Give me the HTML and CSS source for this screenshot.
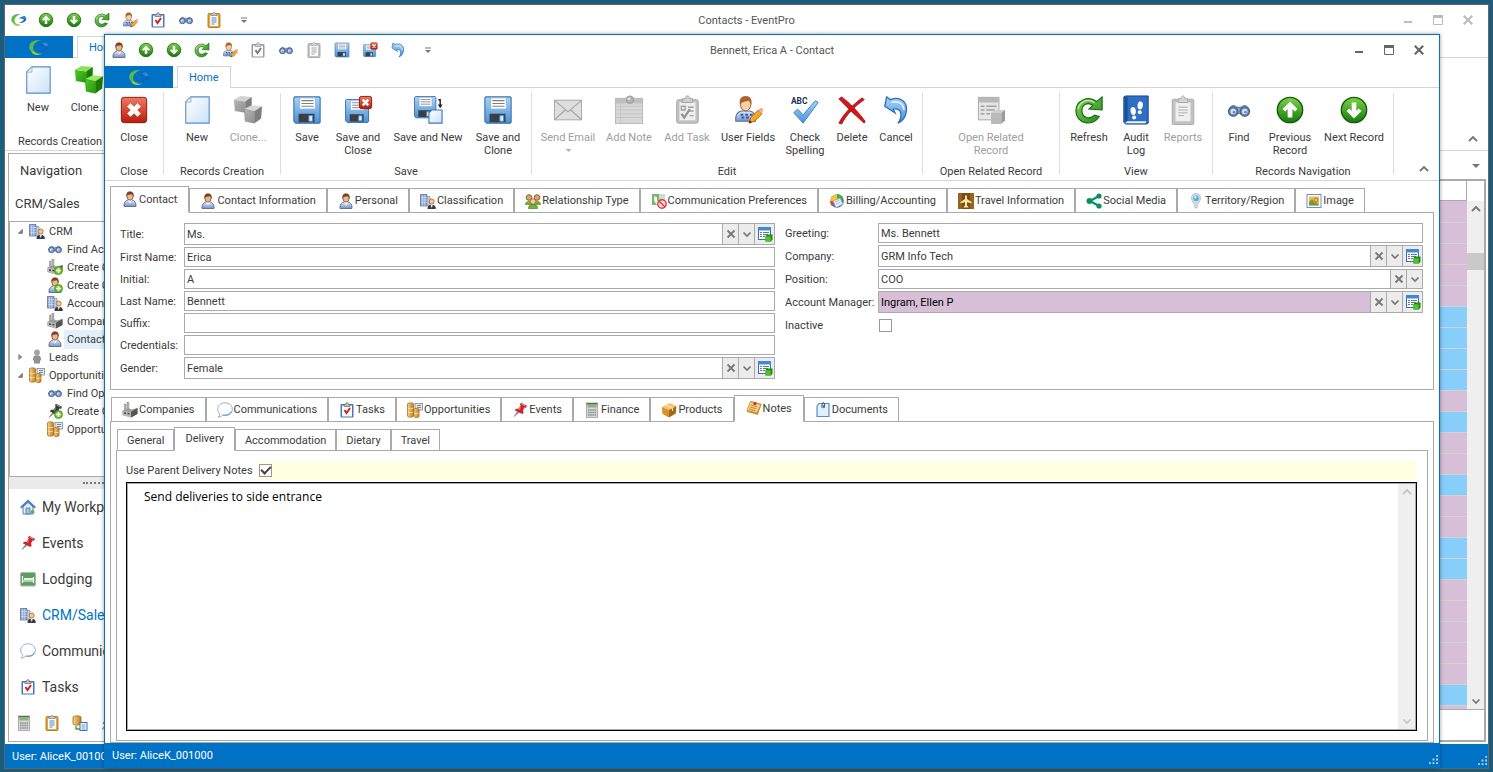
FILE: index.html
```
<!DOCTYPE html>
<html lang="en">
<head>
    <meta charset="UTF-8">
    <title>Contacts - EventPro</title>
    <link rel="stylesheet" href="styles.css">
</head>
<body>
    <!-- Icon set -->
    <svg class="sprite" width="0" height="0" aria-hidden="true">
        <defs>
            <linearGradient id="g-green" x1="0" y1="0" x2="0" y2="1"><stop offset="0" stop-color="#7ed348"/><stop offset="1" stop-color="#167a0a"/></linearGradient>
            <linearGradient id="g-blue" x1="0" y1="0" x2="0" y2="1"><stop offset="0" stop-color="#a9d4f7"/><stop offset="1" stop-color="#4a92d8"/></linearGradient>
            <linearGradient id="g-page" x1="0" y1="0" x2="1" y2="1"><stop offset="0" stop-color="#ffffff"/><stop offset="1" stop-color="#c9e2fa"/></linearGradient>
            <linearGradient id="g-red" x1="0" y1="0" x2="0" y2="1"><stop offset="0" stop-color="#ee7a62"/><stop offset="1" stop-color="#b81c0c"/></linearGradient>
            <linearGradient id="g-shirt" x1="0" y1="0" x2="0" y2="1"><stop offset="0" stop-color="#e3ebf7"/><stop offset="1" stop-color="#7292c4"/></linearGradient>
            <linearGradient id="g-gold" x1="0" y1="0" x2="1" y2="0"><stop offset="0" stop-color="#f8d489"/><stop offset="1" stop-color="#c47d1c"/></linearGradient>
            <linearGradient id="g-arc" x1="0" y1="0" x2="1" y2="1"><stop offset="0" stop-color="#8bd05a"/><stop offset="1" stop-color="#1c8a1c"/></linearGradient>
            <linearGradient id="g-cube" x1="0" y1="0" x2="1" y2="1"><stop offset="0" stop-color="#4fc92a"/><stop offset="1" stop-color="#239608"/></linearGradient>
        </defs>

        <symbol id="i-logo" viewBox="0 0 24 16">
            <path d="M14 1C6 0 2 4 3 9c1 4 6 6 12 4.500C9 14 6 11 6.500 8 7 4.500 10 2 14 1z" fill="#5db947"/>
            <path d="M7 12c2 2 5 2.500 8 1.500-3 2.500-8 2-10-1z" fill="#a5cf3a"/>
            <path d="M11 6l5-2 5 2.500c-1 4-5 5.500-9 5 3-1 5-2 6-4-2-1-4-1.500-7-1.500z" fill="#1d5fae"/>
            <path d="M15 4l4-1 2 3-3 1z" fill="#2f8ad6"/>
        </symbol>
        <symbol id="i-person" viewBox="0 0 16 16">
            <path d="M2 15.500c-.4-4 1.500-6 4-6.500h4c2.500.5 4.400 2.500 4 6.500z" fill="url(#g-shirt)" stroke="#4d6186" stroke-width=".8"/>
            <path d="M6 9l2 3.500L10 9z" fill="#fff"/>
            <ellipse cx="8" cy="5.200" rx="3.100" ry="4" fill="#e8b88c" stroke="#7a4428" stroke-width=".7"/>
            <path d="M4.300 6.500C3.800 2 5.500.4 8 .4s4.300 1.600 3.700 6.100C11 4 10.500 3.500 10 3.300c-2 .7-4 .2-5 1z" fill="#7c3f24"/>
        </symbol>
        <symbol id="i-up" viewBox="0 0 32 32">
            <circle cx="16" cy="16" r="13.500" fill="url(#g-green)" stroke="#0f5e08" stroke-width="1.500"/>
            <path d="M16 7l8 8-3 2.500-2.500-2.500v9h-5v-9L11 17.500 8 15z" fill="#fff"/>
        </symbol>
        <symbol id="i-down" viewBox="0 0 32 32">
            <circle cx="16" cy="16" r="13.500" fill="url(#g-green)" stroke="#0f5e08" stroke-width="1.500"/>
            <path d="M16 25l8-8-3-2.500-2.500 2.500V8h-5v9L11 14.500 8 17z" fill="#fff"/>
        </symbol>
        <symbol id="i-refresh" viewBox="0 0 32 32">
            <path d="M24 7C15 0 2 6 2 17c0 13 17 18 25 6l-5-1.500c-5 5-13 3-13.500-4C8 10 15 7 20 11l-4 4 14 1V2z" fill="url(#g-arc)" stroke="#12680f" stroke-width="1.200"/>
            <path d="M22 8C15 3 6 7 4.500 15" fill="none" stroke="#c5eca6" stroke-width="1.500"/>
        </symbol>
        <symbol id="i-userfields" viewBox="0 0 32 32">
            <path d="M3 28c-1-7 2-10 6-11h9c5 1 7 4 6 11z" fill="url(#g-shirt)" stroke="#5a6f96" stroke-width="1.200"/>
            <path d="M8 21h3M13 21h3M18 21h3M9 24h3M14 24h3" stroke="#2b5db8" stroke-width="2"/>
            <ellipse cx="13.500" cy="10" rx="5.500" ry="7" fill="#f6cfa4" stroke="#9a5a28"/>
            <path d="M7.500 11C6 4 9 1 13.500 1S21 4 19.500 11c0-3-2-4-3-5-3 1-7 0-9 5z" fill="#a8642a"/>
            <path d="M17 30l2-6 8-8 4 4-8 8z" fill="#f7a823" stroke="#b66a0c"/>
            <path d="M27 16l2-2c2-1 4 1 3 3l-2 2z" fill="#f4a9a4"/>
            <path d="M17 30l1-3 2 2z" fill="#222"/>
        </symbol>
        <symbol id="i-task" viewBox="0 0 16 16">
            <rect x="1.500" y="2" width="13" height="13.500" rx="1" fill="#4a76b4"/>
            <rect x="3" y="3.500" width="10" height="11" fill="#f8fafd"/>
            <path d="M5 4.500V2.500h1.500c0-2.500 3-2.500 3 0H11v2z" fill="#b9bfc8" stroke="#555" stroke-width=".6"/>
            <path d="M5.500 8L7.500 11l3.500-5" fill="none" stroke="#cf1f1f" stroke-width="1.900"/>
        </symbol>
        <symbol id="i-addtask" viewBox="0 0 32 32">
            <rect x="5" y="5" width="23" height="25" rx="2" fill="#b4b4b4" stroke="#909090"/>
            <rect x="8" y="8" width="17" height="19" fill="#ececec"/>
            <path d="M11 8V4h3c0-4 5-4 5 0h3v4z" fill="#c4c4c4" stroke="#888"/>
            <path d="M10 12h4v4h-4zM17 13h6M17 17h6M19 22h4" fill="none" stroke="#888" stroke-width="1.500"/>
            <path d="M10 20l3 4 6-9" fill="none" stroke="#777" stroke-width="2.400"/>
        </symbol>
        <symbol id="i-find" viewBox="-2 -2 36 36">
            <path d="M4 12c2-3 6-3 9 0h6c3-3 7-3 9 0l3 6-15 3L1 18z" fill="#8fa4c4" stroke="#4a5e80"/>
            <circle cx="8" cy="18" r="6.500" fill="#6d88b2" stroke="#3f5680" stroke-width="1.500"/>
            <circle cx="24" cy="18" r="6.500" fill="#6d88b2" stroke="#3f5680" stroke-width="1.500"/>
            <circle cx="8" cy="18" r="3.800" fill="#cfe6fb"/>
            <circle cx="24" cy="18" r="3.800" fill="#cfe6fb"/>
            <circle cx="9" cy="19" r="1.800" fill="#5a8ccc"/>
            <circle cx="25" cy="19" r="1.800" fill="#5a8ccc"/>
        </symbol>
        <symbol id="i-clip" viewBox="0 0 16 16">
            <rect x="2" y="1.500" width="12" height="14" rx="1.200" fill="#eaa928" stroke="#9c6a10" stroke-width=".8"/>
            <rect x="4" y="3.500" width="8" height="10.500" fill="#f6fafd"/>
            <path d="M5 3.500V1.500h1.800c0-1.500 2.400-1.500 2.400 0H11v2z" fill="#c5cad2" stroke="#666" stroke-width=".5"/>
            <path d="M5.500 6h5M5.500 8h5M5.500 10h5M5.500 12h3" stroke="#4d7cb4" stroke-width=".9"/>
        </symbol>
        <symbol id="i-save" viewBox="0 0 32 32">
            <path d="M3 2h26l1 1v26l-1 1H4l-2-2V3z" fill="url(#g-blue)" stroke="#3a72ac" stroke-width="1.200"/>
            <path d="M8 3h17v12H8z" fill="#fff" stroke="#8fb2d6"/>
            <path d="M10 6h13M10 9h13M10 12h13" stroke="#808080" stroke-width="1.100"/>
            <path d="M7 20h17v9H7z" fill="#3b3f45"/>
            <path d="M18 22h4v6h-4z" fill="#e4effa" stroke="#4d90d6"/>
        </symbol>
        <symbol id="i-saveclose" viewBox="0 0 32 32">
            <use href="#i-save" width="28" height="28" x="1" y="3"/>
            <rect x="17.500" y="1.500" width="13" height="13" rx="2" fill="url(#g-red)" stroke="#8d1206"/>
            <path d="M21 5l6 6M27 5l-6 6" stroke="#fff" stroke-width="2.600"/>
        </symbol>
        <symbol id="i-savenew" viewBox="0 0 32 32">
            <use href="#i-save" width="26" height="26" x="0" y="0"/>
            <path d="M20 16h11v14H17V19z" fill="url(#g-page)" stroke="#3c78c0" stroke-width="1.200"/>
            <path d="M27 5h2v6M29 7v4" fill="none" stroke="#222" stroke-width="1.500"/>
            <path d="M26.500 10h5L29 14z" fill="#222"/>
        </symbol>
        <symbol id="i-undo" viewBox="0 0 32 32">
            <path d="M4 12L6 2l4 3c10-4 19 2 17 13-1 6-4 10-9 12 5-6 5-17-5-15l2 4z" fill="url(#g-blue)" stroke="#2d6fb8" stroke-width="1.400"/>
            <path d="M11 8c7-2 13 1 13.500 8" fill="none" stroke="#e0f0fc" stroke-width="1.800"/>
        </symbol>
        <symbol id="i-new" viewBox="0 0 32 32">
            <path d="M9.500 2h19.500v28H4V7.500z" fill="url(#g-page)" stroke="#5a8dc8" stroke-width="1.200"/>
            <path d="M9.500 2v5.500H4z" fill="#fff" stroke="#7fa9d8"/>
        </symbol>
        <symbol id="i-clone" viewBox="0 0 32 32">
            <path d="M1 5l12 2v12L2 17z" fill="url(#g-cube)"/>
            <path d="M1 5l7-4 12 1-7 5z" fill="#8be354"/>
            <path d="M13 7l7-5v11l-7 6z" fill="#1c7a09"/>
            <path d="M12 15l11 2v13l-10-2z" fill="url(#g-cube)" stroke="#1c7a09" stroke-width=".5"/>
            <path d="M12 15l8-4 11 1-8 5z" fill="#9aea66"/>
            <path d="M23 17l8-5-1 13-7 5z" fill="#1c7a09"/>
        </symbol>
        <symbol id="i-close" viewBox="0 0 32 32">
            <rect x="2.500" y="2.500" width="27" height="27" rx="3" fill="url(#g-red)" stroke="#8d1206"/>
            <path d="M10.500 10.500l11 11M21.500 10.500l-11 11" stroke="#fff" stroke-width="5"/>
        </symbol>
        <symbol id="i-mail" viewBox="0 0 32 32">
            <rect x="1.500" y="5.500" width="29" height="21" fill="#d6d6d6" stroke="#8f8f8f"/>
            <path d="M2 6l14 12L30 6M2 26l11-10M30 26L19 16" fill="none" stroke="#8f8f8f" stroke-width="1.200"/>
        </symbol>
        <symbol id="i-addnote" viewBox="0 0 32 32">
            <rect x="1.500" y="3.500" width="29" height="27" fill="#cecece" stroke="#a5a5a5"/>
            <path d="M2 12h28M2 16h28M2 20h28M2 24h28M7 4v26" stroke="#b5b5b5"/>
            <path d="M2 4h28v5H2z" fill="#b0b0b0"/>
            <circle cx="17" cy="5" r="4" fill="#a0a0a0" stroke="#808080"/>
            <circle cx="16" cy="4" r="1.400" fill="#e4e4e4"/>
        </symbol>
        <symbol id="i-check" viewBox="0 0 32 32">
            <path d="M4 19l4-4 6 6L27 6l3 2-16 22z" fill="url(#g-blue)" stroke="#3a7fc4"/>
            <text x="1" y="10" class="icon-abc">ABC</text>
        </symbol>
        <symbol id="i-delete" viewBox="0 0 32 32">
            <path d="M2 4l3-2c8 6 17 15 25 26l-1 2C20 22 10 13 2 4z" fill="#d8161c" stroke="#8f0b0f" stroke-width=".8"/>
            <path d="M27 3l2 2C19 12 10 21 5 31l-3-1C7 20 17 10 27 3z" fill="#d8161c" stroke="#8f0b0f" stroke-width=".8"/>
        </symbol>
        <symbol id="i-related" viewBox="0 0 32 32">
            <rect x="2.500" y="2.500" width="22" height="24" fill="#e0e0e0" stroke="#909090"/>
            <path d="M3 3h21v5H3z" fill="#a6a6a6"/>
            <path d="M5 12h4M11 12h11M5 16h4M11 16h9M5 20h4M11 20h4" stroke="#8a8a8a" stroke-width="1.500"/>
            <path d="M16 19l4-3h11l-4 3z" fill="#c5c5c5"/><path d="M16 19h11v12H16z" fill="#a9a9a9"/><path d="M27 19l4-3v11l-4 4z" fill="#848484"/>
        </symbol>
        <symbol id="i-audit" viewBox="0 0 32 32">
            <path d="M5 1h24v29l-2 1H5l-2-2V2z" fill="#2e6fc4" stroke="#17437f"/>
            <path d="M5 30h21l1-2H6z" fill="#eef4fb"/>
            <path d="M4 2h3v26H4z" fill="#1d4f98"/>
            <ellipse cx="13" cy="17" rx="2.800" ry="4.300" fill="#fff" transform="rotate(-8 13 17)"/><circle cx="14" cy="24" r="2.100" fill="#fff"/>
            <ellipse cx="20.500" cy="11" rx="2.800" ry="4.300" fill="#fff" transform="rotate(8 20 11)"/><circle cx="20" cy="18.300" r="2.100" fill="#fff"/>
        </symbol>
        <symbol id="i-reports" viewBox="0 0 32 32">
            <rect x="4.500" y="4.500" width="23" height="27" rx="1.500" fill="#b2b2b2" stroke="#929292"/>
            <rect x="8" y="8" width="16" height="20" fill="#ececec"/>
            <path d="M11 8V4h3c0-4 4-4 4 0h3v4z" fill="#cdcdcd" stroke="#929292"/>
            <path d="M11 13h10M11 16h10M11 19h10M11 22h6" stroke="#989898"/>
        </symbol>
        <symbol id="i-crm" viewBox="0 0 16 16">
            <path d="M.5 1.500h6.500V13H.5z" fill="#8ea6d2" stroke="#5b71a4" stroke-width=".8"/>
            <path d="M7 3.500h3V13H7z" fill="#c0cde6" stroke="#6b80b0" stroke-width=".6"/>
            <path d="M2.500 2v11M4.800 2v11M1 4.500h6M1 7h6M1 9.500h6" stroke="#dbe4f5" stroke-width=".6"/>
            <path d="M7.500 16c0-3 1-4.300 4-4.300s4.300 1.300 4.300 4.300z" fill="#3b3b45"/>
            <path d="M10.500 11.500l1.200 3.500 1.200-3.500z" fill="#fff"/>
            <circle cx="11.700" cy="8.500" r="2.500" fill="#f4c88f" stroke="#a8641c" stroke-width=".8"/>
        </symbol>
        <symbol id="i-group" viewBox="0 0 16 16">
            <path d="M0 12c0-3 1.500-4 4-4s4 1 4 4zM8 12c0-3 1.500-4 4-4s4 1 4 4z" fill="#7aa83a"/>
            <circle cx="4" cy="4.500" r="2.800" fill="#dfa66a" stroke="#8e5a2c"/>
            <circle cx="12" cy="4.500" r="2.800" fill="#dfa66a" stroke="#8e5a2c"/>
            <path d="M3.500 15.500c0-3 1.500-4 4.500-4s4.500 1 4.500 4z" fill="#6fb33a" stroke="#3d701a" stroke-width=".6"/>
            <circle cx="8" cy="8.500" r="2.700" fill="#f5cda0" stroke="#a0663c" stroke-width=".8"/>
        </symbol>
        <symbol id="i-commpref" viewBox="0 0 16 16">
            <path d="M1 1h10v11H1z" fill="#7ab570"/><path d="M8 1h6v12H8z" fill="#c9e0c4"/>
            <path d="M3 3l3 1v3l2 3-2 2-3-4z" fill="#e9f5e6"/>
            <circle cx="11" cy="11" r="4.200" fill="#fbdede" stroke="#d93b45" stroke-width="1.400"/>
            <path d="M8 8l6 6" stroke="#d93b45" stroke-width="1.400"/>
        </symbol>
        <symbol id="i-billing" viewBox="0 0 16 16">
            <circle cx="8" cy="8" r="6.800" fill="#2e79cf"/>
            <path d="M8 8L1.500 10A7 7 0 0 1 8 1.200z" fill="#f5c92f"/>
            <path d="M8 8V1.200A7 7 0 0 1 14.500 6z" fill="#4ba83a"/>
            <path d="M8 8L3 13A7 7 0 0 1 1.300 8z" fill="#e0432a"/>
            <path d="M4 8l7-3 3 6-7 3.500z" fill="#eceff3" stroke="#9aa4b0" stroke-width=".8"/>
            <path d="M6 9l4.500-2M7 11l4.500-2" stroke="#b4bcc8"/>
        </symbol>
        <symbol id="i-travel" viewBox="0 0 16 16">
            <rect width="16" height="16" fill="#7a4c14"/><path d="M0 0h4v16H0zM12 0h4v16h-4z" fill="#96641f"/>
            <path d="M8 2c.8 0 1 1 1 4l4.500 3v1.300L9 9.300V12.500l1.500 1.200v.8h-5v-.8L7 12.500V9.300l-4.500 1V9L7 6C7 3 7.200 2 8 2z" fill="#ffe5a6"/>
        </symbol>
        <symbol id="i-share" viewBox="0 0 16 16">
            <path d="M13 3L4 8l9 5" fill="none" stroke="#0a8f62" stroke-width="2.200"/>
            <circle cx="13" cy="3" r="2.600" fill="#0a8f62"/><circle cx="3.500" cy="8" r="3" fill="#0a8f62"/><circle cx="13" cy="13" r="2.600" fill="#0a8f62"/>
        </symbol>
        <symbol id="i-region" viewBox="0 0 16 16">
            <path d="M8 .5c3 0 4.700 2 4.700 4.700C12.700 8 9.500 10 9 15H7C6.500 10 3.300 8 3.300 5.200 3.300 2.500 5 .5 8 .5z" fill="#d3d9df" stroke="#b3bac2" stroke-width=".7"/>
            <circle cx="8" cy="5.200" r="2.800" fill="#4bb4e2"/><circle cx="7.300" cy="4.200" r="1.200" fill="#cdeefb"/>
        </symbol>
        <symbol id="i-image" viewBox="0 0 16 16">
            <rect x="1" y="1.500" width="14" height="13" fill="#fff" stroke="#6c90c6"/>
            <rect x="3" y="3.500" width="10" height="9" fill="#f1bd4c"/>
            <path d="M3 9l3-3 3 4 1.500-1L13 12.500H3z" fill="#6f9f35"/><circle cx="10" cy="7" r="2.400" fill="#dd7a2b"/><circle cx="10" cy="7" r="1" fill="#ffe9a0"/>
        </symbol>
        <symbol id="i-factory" viewBox="0 0 16 16">
            <path d="M2.500 2H4v7H2.500zM5 0h1.800v8H5z" fill="#b6b6b6" stroke="#7a7a7a" stroke-width=".5"/>
            <path d="M.5 8.500L7 6l2 1.500L15.500 6v6L9 15.500.5 13z" fill="#9b9b9b"/>
            <path d="M.5 8.500L9 10v5.500L.5 13z" fill="#b8b8b8"/><path d="M9 10l6.500-4v6L9 15.500z" fill="#555"/>
            <path d="M2 10.300l2 .3v1.500l-2-.3zM5.500 10.800l2 .3v1.500l-2-.3z" fill="#444"/>
        </symbol>
        <symbol id="i-plus" viewBox="0 0 16 16">
            <circle cx="11.500" cy="11.500" r="4" fill="#6cc424" stroke="#3d8a10" stroke-width=".7"/>
            <path d="M11.500 9v5M9 11.500h5" stroke="#fff" stroke-width="1.500"/>
        </symbol>
        <symbol id="i-lead" viewBox="0 0 16 16">
            <circle cx="8" cy="3.500" r="2.900" fill="#a3a3a3"/>
            <path d="M4 10c0-3 1.500-3.800 4-3.800s4 .8 4 3.800v1l-1 1v2.500H5V12l-1-1z" fill="#929292"/>
        </symbol>
        <symbol id="i-coins" viewBox="0 0 16 16">
            <rect x="8" y="1.500" width="7.500" height="6.500" fill="#e3e7ec" stroke="#7c8896" stroke-width=".8"/>
            <path d="M10 3.500h4M10 5.500h4" stroke="#7c8896"/>
            <path d="M.5 2c0-1.500 6-1.500 6 0v12c0 1.500-6 1.500-6 0z" fill="url(#g-gold)" stroke="#a36b1c" stroke-width=".8"/>
            <path d="M.5 6c1 .8 5 .8 6 0M.5 10c1 .8 5 .8 6 0" fill="none" stroke="#fff0c0" stroke-width=".7"/>
            <path d="M7 7.500c0-1.500 5-1.500 5 0v7c0 1.500-5 1.500-5 0z" fill="url(#g-gold)" stroke="#a36b1c" stroke-width=".8"/>
            <path d="M7 11c1 .8 4 .8 5 0" fill="none" stroke="#fff0c0" stroke-width=".7"/>
        </symbol>
        <symbol id="i-pushpin" viewBox="0 0 16 16">
            <path d="M2 14.500l4-5.500 1.500 1z" fill="#777" stroke="#777" stroke-width=".5"/>
            <path d="M9 .8l6 3-.8 2-1.700-.2-1.500 3 .6 2.200-1.200 1.200L3 8.500l.8-1.700 2.700-.1L8.700 3.800 8 2.500z" fill="currentColor"/>
            <path d="M9.500 2l4 2M8.500 5.500L7 8" stroke="#fff" stroke-opacity=".5"/>
        </symbol>
        <symbol id="i-home" viewBox="0 0 16 16">
            <path d="M3 8v7h10V8L8 3.500z" fill="#e6effa" stroke="#5580ba"/>
            <path d="M.8 8.800L8 1.800l7.200 7" fill="none" stroke="#4a7cc0" stroke-width="1.900"/>
            <path d="M6 9h4v6H6z" fill="#a8c4e8" stroke="#3967a8" stroke-width=".7"/>
            <circle cx="12.500" cy="13" r="2" fill="#5fb53a"/>
        </symbol>
        <symbol id="i-bed" viewBox="0 0 16 16">
            <rect x=".5" y="1.500" width="15" height="13.500" rx="1.500" fill="#5f9c62" stroke="#a3bfa4"/>
            <path d="M2.500 5v7M2.500 10h11M13.500 6v6" stroke="#fff" stroke-width="1.200"/><path d="M4 7h9v2H4z" fill="#e4f2e4"/>
        </symbol>
        <symbol id="i-bubble" viewBox="0 0 16 16">
            <path d="M8 .8c4.200 0 7.300 2.800 7.300 6.400S12.200 13.500 8 13.500c-.8 0-1.600 0-2.300-.3C4.500 14.300 3 15 1.200 15.200c1-1 1.500-2.200 1.500-3.500C1.400 10.600.7 9.200.7 7.200.7 3.600 3.800.8 8 .8z" fill="#fdfeff" stroke="#9aa4b0" stroke-width=".9"/>
            <path d="M14.500 9.500c-1.200 2.800-4.500 4-8.500 3.500" fill="none" stroke="#6fa4d8" stroke-width="1.200"/>
        </symbol>
        <symbol id="i-calc" viewBox="0 0 16 16">
            <rect x="2.500" y="1" width="11" height="14.500" fill="#d9d9d9" stroke="#9b9b9b" stroke-width=".8"/>
            <rect x="2.500" y="1" width="11" height="1.500" fill="#666"/><rect x="3.500" y="3" width="9" height="2.500" fill="#7cbd6c"/>
            <path d="M4 8h8M4 10.500h8M4 13h8" stroke="#888" stroke-width="1.500" stroke-dasharray="1.500 .7"/>
        </symbol>
        <symbol id="i-coindoc" viewBox="0 0 16 16">
            <path d="M1 2c0-1.500 8-1.500 8 0v7c0 1.500-8 1.500-8 0z" fill="url(#g-gold)" stroke="#a36b1c" stroke-width=".8"/>
            <path d="M4 11v3h4" fill="none" stroke="#3fa02a" stroke-width="1.300"/>
            <rect x="8" y="7.500" width="7" height="8" fill="#f4f9fe" stroke="#3c73b8"/><path d="M9.500 10h4M9.500 12h4M9.500 14h4" stroke="#3c73b8" stroke-width=".7"/>
        </symbol>
        <symbol id="i-box" viewBox="0 0 16 16">
            <path d="M.8 5L9 1l6.400 3-7.400 4z" fill="#f2c56f"/><path d="M.8 5L8 8v7.500L1.500 12z" fill="#d8932f"/><path d="M8 8l7.400-4-.6 7.500L8 15.500z" fill="#a9651a"/>
            <path d="M4.500 3.200L11.500 6v3" fill="none" stroke="#fbe3b0" stroke-width="1.100"/>
        </symbol>
        <symbol id="i-notes" viewBox="0 0 16 16">
            <path d="M5 1l10.500 3-3.500 11L.8 12z" fill="#cf9336"/>
            <path d="M4.500 1.500l10.500 3-4 8.500L.8 10.500z" fill="#f3cf85" stroke="#b8802c" stroke-width=".7"/>
            <path d="M5 5l6 1.800M4.200 7l6 1.800M3.300 9l6 1.800" stroke="#b8802c" stroke-width=".9"/><circle cx="9" cy="3.500" r="1.600" fill="#cf2525"/>
        </symbol>
        <symbol id="i-docs" viewBox="0 0 16 16">
            <path d="M4 1.500h10v13H2V4z" fill="#e2effc" stroke="#5a8dc8" stroke-width="1.200"/>
            <path d="M7 6V1.800c0-1.500 2.500-1.500 2.500 0v3.400c0 .8-1.200.8-1.200 0V3" fill="none" stroke="#3a4a60" stroke-width=".9"/>
        </symbol>
        <symbol id="i-lookup" viewBox="0 0 16 16">
            <rect x="1.500" y="1.500" width="12" height="12" fill="#fff" stroke="#2f72b8"/>
            <path d="M1 1h13v3.500H1z" fill="#3e8ad6"/>
            <path d="M3 6.500h2M6 6.500h6M3 8.500h2M6 8.500h5M3 10.500h2M6 10.500h2" stroke="#66788c"/>
            <path d="M8.500 10l1.500-1.500h5.500v5l-1.500 2H8.500z" fill="#1f8a10"/><path d="M8.500 10.300h5.200v5.200H8.500z" fill="#4cc22c"/>
        </symbol>
        <symbol id="i-x" viewBox="0 0 10 10"><path d="M1.500 1.500l7 7M8.500 1.500l-7 7" fill="none" stroke="currentColor" stroke-width="1.800"/></symbol>
        <symbol id="i-chevdown" viewBox="0 0 10 10"><path d="M1.500 3.500L5 7l3.500-3.500" fill="none" stroke="currentColor" stroke-width="1.700"/></symbol>
        <symbol id="i-chevup" viewBox="0 0 10 10"><path d="M1 7l4-4 4 4" fill="none" stroke="currentColor" stroke-width="1.900"/></symbol>
        <symbol id="i-more" viewBox="0 0 10 10"><path d="M2 3h6" stroke="currentColor"/><path d="M2 5h6L5 8z" fill="currentColor"/></symbol>
        <symbol id="i-caret" viewBox="0 0 10 10"><path d="M1 3h8L5 7z" fill="currentColor"/></symbol>
        <symbol id="i-min" viewBox="0 0 12 12"><path d="M2 8h8" stroke="currentColor" stroke-width="2"/></symbol>
        <symbol id="i-max" viewBox="0 0 12 12"><path d="M1.500 1.500h9v9h-9z" fill="none" stroke="currentColor"/><path d="M1 2.500h10" stroke="currentColor" stroke-width="3"/></symbol>
        <symbol id="i-grip" viewBox="0 0 10 10"><path d="M8 0h2v2H8zM4 4h2v2H4zM8 4h2v2H8zM0 8h2v2H0zM4 8h2v2H4zM8 8h2v2H8z" fill="#c5d3e0"/></symbol>
        <symbol id="i-open" viewBox="0 0 10 10"><path d="M8.500 2v6.500H2z" fill="#777"/></symbol>
        <symbol id="i-shut" viewBox="0 0 10 10"><path d="M3 1l5 4-5 4z" fill="#888"/></symbol>
    </svg>

    <!-- Contacts list window -->
    <div class="window main-window">
        <div class="title-bar">
            <div class="quick-access">
                <svg class="qa-logo"><use href="#i-logo"/></svg>
                <button aria-label="Previous"><svg class="icon"><use href="#i-up"/></svg></button>
                <button aria-label="Next"><svg class="icon"><use href="#i-down"/></svg></button>
                <button aria-label="Refresh"><svg class="icon"><use href="#i-refresh"/></svg></button>
                <button aria-label="User Fields"><svg class="icon"><use href="#i-userfields"/></svg></button>
                <button aria-label="Tasks"><svg class="icon"><use href="#i-task"/></svg></button>
                <button aria-label="Find"><svg class="icon"><use href="#i-find"/></svg></button>
                <button aria-label="Reports"><svg class="icon"><use href="#i-clip"/></svg></button>
                <button class="qa-more" aria-label="Customize"><svg class="glyph"><use href="#i-more"/></svg></button>
            </div>
            <div class="window-title">Contacts - EventPro</div>
            <div class="window-controls">
                <button aria-label="Minimize"><svg><use href="#i-min"/></svg></button>
                <button aria-label="Maximize"><svg><use href="#i-max"/></svg></button>
                <button aria-label="Close window"><svg><use href="#i-x"/></svg></button>
            </div>
        </div>
        <div class="ribbon-tabs">
            <button class="file-button" aria-label="Application menu"><svg><use href="#i-logo"/></svg></button>
            <button class="ribbon-tab">Home</button>
        </div>
        <div class="ribbon">
            <div class="ribbon-group">
                <div class="ribbon-buttons">
                    <button class="rb w58"><svg><use href="#i-new"/></svg>New</button>
                    <button class="rb w44"><svg><use href="#i-clone"/></svg>Clone...</button>
                </div>
                <div class="ribbon-caption">Records Creation</div>
            </div>
            <button class="ribbon-collapse" aria-label="Collapse ribbon"><svg class="glyph"><use href="#i-chevup"/></svg></button>
        </div>
        <div class="main-body">
            <div class="nav-panel">
                <h2>Navigation</h2>
                <h3>CRM/Sales</h3>
                <ul class="tree">
                    <li><svg class="toggle"><use href="#i-open"/></svg><svg class="icon"><use href="#i-crm"/></svg><span>CRM</span></li>
                    <li class="child"><svg class="icon"><use href="#i-find"/></svg><span>Find Accounts</span></li>
                    <li class="child"><svg class="icon"><use href="#i-factory"/><use href="#i-plus"/></svg><span>Create Company</span></li>
                    <li class="child"><svg class="icon"><use href="#i-person"/><use href="#i-plus"/></svg><span>Create Contact</span></li>
                    <li class="child"><svg class="icon"><use href="#i-crm"/></svg><span>Accounts</span></li>
                    <li class="child"><svg class="icon"><use href="#i-factory"/></svg><span>Companies</span></li>
                    <li class="child selected"><svg class="icon"><use href="#i-person"/></svg><span>Contacts</span></li>
                    <li><svg class="toggle"><use href="#i-shut"/></svg><svg class="icon"><use href="#i-lead"/></svg><span>Leads</span></li>
                    <li><svg class="toggle"><use href="#i-open"/></svg><svg class="icon"><use href="#i-coins"/></svg><span>Opportunities</span></li>
                    <li class="child"><svg class="icon"><use href="#i-find"/></svg><span>Find Opportunities</span></li>
                    <li class="child"><svg class="icon"><use href="#i-pushpin"/><use href="#i-plus"/></svg><span>Create Opportunity</span></li>
                    <li class="child"><svg class="icon"><use href="#i-coins"/></svg><span>Opportunities</span></li>
                </ul>
                <div class="splitter"></div>
                <nav class="nav-links">
                    <a href="#"><svg class="icon"><use href="#i-home"/></svg>My Workplace</a>
                    <a href="#"><svg class="icon red"><use href="#i-pushpin"/></svg>Events</a>
                    <a href="#"><svg class="icon"><use href="#i-bed"/></svg>Lodging</a>
                    <a href="#" class="current"><svg class="icon"><use href="#i-crm"/></svg>CRM/Sales</a>
                    <a href="#"><svg class="icon"><use href="#i-bubble"/></svg>Communications</a>
                    <a href="#"><svg class="icon"><use href="#i-task"/></svg>Tasks</a>
                </nav>
                <div class="nav-small">
                    <button aria-label="Finance"><svg class="icon"><use href="#i-calc"/></svg></button>
                    <button aria-label="Reports"><svg class="icon"><use href="#i-clip"/></svg></button>
                    <button aria-label="Data"><svg class="icon"><use href="#i-coindoc"/></svg></button>
                    <button aria-label="Pinned"><svg class="icon"><use href="#i-pushpin"/></svg></button>
                </div>
            </div>
            <div class="list-area">
                <div class="list-toolbar"><button aria-label="Views"><svg class="glyph"><use href="#i-caret"/></svg></button></div>
                <div class="list-frame">
                    <div class="list-header"></div>
                    <div class="list-scroll">
                        <table class="list-rows">
                            <tr><td></td></tr><tr><td></td></tr><tr><td></td></tr><tr><td></td></tr><tr><td></td></tr>
                            <tr class="blue"><td></td></tr><tr class="blue"><td></td></tr><tr class="blue"><td></td></tr><tr class="blue"><td></td></tr>
                            <tr><td></td></tr><tr class="blue"><td></td></tr><tr><td></td></tr><tr><td></td></tr>
                            <tr class="blue"><td></td></tr><tr><td></td></tr><tr><td></td></tr>
                            <tr class="blue"><td></td></tr><tr class="blue"><td></td></tr>
                            <tr><td></td></tr><tr><td></td></tr><tr><td></td></tr><tr><td></td></tr><tr><td></td></tr>
                            <tr class="blue"><td></td></tr><tr><td></td></tr>
                        </table>
                        <div class="scrollbar">
                            <svg class="glyph"><use href="#i-chevup"/></svg>
                            <div class="thumb"></div>
                            <svg class="glyph"><use href="#i-chevdown"/></svg>
                        </div>
                    </div>
                    <div class="list-footer"></div>
                </div>
            </div>
        </div>
        <div class="status-bar"><span>User: AliceK_001000</span><svg class="grip"><use href="#i-grip"/></svg></div>
    </div>

    <!-- Contact window -->
    <div class="window contact-window">
        <div class="title-bar">
            <div class="quick-access">
                <svg class="icon qa-person"><use href="#i-person"/></svg>
                <button aria-label="Previous"><svg class="icon"><use href="#i-up"/></svg></button>
                <button aria-label="Next"><svg class="icon"><use href="#i-down"/></svg></button>
                <button aria-label="Refresh"><svg class="icon"><use href="#i-refresh"/></svg></button>
                <button aria-label="User Fields"><svg class="icon"><use href="#i-userfields"/></svg></button>
                <button aria-label="Add Task" disabled><svg class="icon"><use href="#i-task"/></svg></button>
                <button aria-label="Find"><svg class="icon"><use href="#i-find"/></svg></button>
                <button aria-label="Reports" disabled><svg class="icon"><use href="#i-clip"/></svg></button>
                <button aria-label="Save"><svg class="icon"><use href="#i-save"/></svg></button>
                <button aria-label="Save and Close"><svg class="icon"><use href="#i-saveclose"/></svg></button>
                <button aria-label="Cancel"><svg class="icon"><use href="#i-undo"/></svg></button>
                <button class="qa-more" aria-label="Customize"><svg class="glyph"><use href="#i-more"/></svg></button>
            </div>
            <div class="window-title">Bennett, Erica A - Contact</div>
            <div class="window-controls">
                <button aria-label="Minimize"><svg><use href="#i-min"/></svg></button>
                <button aria-label="Maximize"><svg><use href="#i-max"/></svg></button>
                <button aria-label="Close window"><svg><use href="#i-x"/></svg></button>
            </div>
        </div>
        <div class="ribbon-tabs">
            <button class="file-button" aria-label="Application menu"><svg><use href="#i-logo"/></svg></button>
            <button class="ribbon-tab">Home</button>
        </div>
        <div class="ribbon">
            <div class="ribbon-group">
                <div class="ribbon-buttons">
                    <button class="rb w50"><svg><use href="#i-close"/></svg>Close</button>
                </div>
                <div class="ribbon-caption">Close</div>
            </div>
            <div class="ribbon-group records">
                <div class="ribbon-buttons">
                    <button class="rb w58"><svg><use href="#i-new"/></svg>New</button>
                    <button class="rb w44" disabled><svg><use href="#i-clone"/></svg>Clone...</button>
                </div>
                <div class="ribbon-caption">Records Creation</div>
            </div>
            <div class="ribbon-group">
                <div class="ribbon-buttons">
                    <button class="rb w44"><svg><use href="#i-save"/></svg>Save</button>
                    <button class="rb w58"><svg><use href="#i-saveclose"/></svg>Save and<br>Close</button>
                    <button class="rb w82"><svg><use href="#i-savenew"/></svg>Save and New</button>
                    <button class="rb w58"><svg><use href="#i-save"/></svg>Save and<br>Clone</button>
                </div>
                <div class="ribbon-caption">Save</div>
            </div>
            <div class="ribbon-group">
                <div class="ribbon-buttons">
                    <button class="rb w64" disabled><svg><use href="#i-mail"/></svg>Send Email<svg class="drop"><use href="#i-caret"/></svg></button>
                    <button class="rb w58" disabled><svg><use href="#i-addnote"/></svg>Add Note</button>
                    <button class="rb w58" disabled><svg><use href="#i-addtask"/></svg>Add Task</button>
                    <button class="rb w64"><svg><use href="#i-userfields"/></svg>User Fields</button>
                    <button class="rb w50"><svg><use href="#i-check"/></svg>Check<br>Spelling</button>
                    <button class="rb w44"><svg><use href="#i-delete"/></svg>Delete</button>
                    <button class="rb w44"><svg><use href="#i-undo"/></svg>Cancel</button>
                </div>
                <div class="ribbon-caption">Edit</div>
            </div>
            <div class="ribbon-group">
                <div class="ribbon-buttons">
                    <button class="rb w128" disabled><svg><use href="#i-related"/></svg>Open Related<br>Record</button>
                </div>
                <div class="ribbon-caption">Open Related Record</div>
            </div>
            <div class="ribbon-group">
                <div class="ribbon-buttons">
                    <button class="rb w50"><svg><use href="#i-refresh"/></svg>Refresh</button>
                    <button class="rb w44"><svg><use href="#i-audit"/></svg>Audit<br>Log</button>
                    <button class="rb w50" disabled><svg><use href="#i-reports"/></svg>Reports</button>
                </div>
                <div class="ribbon-caption">View</div>
            </div>
            <div class="ribbon-group">
                <div class="ribbon-buttons">
                    <button class="rb w44 find"><svg><use href="#i-find"/></svg>Find</button>
                    <button class="rb w58"><svg><use href="#i-up"/></svg>Previous<br>Record</button>
                    <button class="rb w70"><svg><use href="#i-down"/></svg>Next Record</button>
                </div>
                <div class="ribbon-caption">Records Navigation</div>
            </div>
            <button class="ribbon-collapse" aria-label="Collapse ribbon"><svg class="glyph"><use href="#i-chevup"/></svg></button>
        </div>

        <div class="contact-body">
            <div class="page-tabs">
                <button class="active"><svg class="icon"><use href="#i-person"/></svg>Contact</button>
                <button><svg class="icon"><use href="#i-person"/></svg>Contact Information</button>
                <button><svg class="icon"><use href="#i-person"/></svg>Personal</button>
                <button><svg class="icon"><use href="#i-crm"/></svg>Classification</button>
                <button><svg class="icon"><use href="#i-group"/></svg>Relationship Type</button>
                <button><svg class="icon"><use href="#i-commpref"/></svg>Communication Preferences</button>
                <button><svg class="icon"><use href="#i-billing"/></svg>Billing/Accounting</button>
                <button><svg class="icon"><use href="#i-travel"/></svg>Travel Information</button>
                <button><svg class="icon"><use href="#i-share"/></svg>Social Media</button>
                <button><svg class="icon"><use href="#i-region"/></svg>Territory/Region</button>
                <button><svg class="icon"><use href="#i-image"/></svg>Image</button>
            </div>
            <form class="details">
                <div class="fields left">
                    <label for="title">Title:</label>
                    <div class="combo"><select id="title"><option>Ms.</option></select><button type="button" aria-label="Clear"><svg class="glyph"><use href="#i-x"/></svg></button><button type="button" aria-label="Open list"><svg class="glyph"><use href="#i-chevdown"/></svg></button><button type="button" class="lookup" aria-label="Look up"><svg class="icon"><use href="#i-lookup"/></svg></button></div>
                    <label for="firstName">First Name:</label>
                    <input type="text" id="firstName" value="Erica">
                    <label for="initial">Initial:</label>
                    <input type="text" id="initial" value="A">
                    <label for="lastName">Last Name:</label>
                    <input type="text" id="lastName" value="Bennett">
                    <label for="suffix">Suffix:</label>
                    <input type="text" id="suffix">
                    <label for="credentials">Credentials:</label>
                    <input type="text" id="credentials">
                    <label for="gender">Gender:</label>
                    <div class="combo"><select id="gender"><option>Female</option></select><button type="button" aria-label="Clear"><svg class="glyph"><use href="#i-x"/></svg></button><button type="button" aria-label="Open list"><svg class="glyph"><use href="#i-chevdown"/></svg></button><button type="button" class="lookup" aria-label="Look up"><svg class="icon"><use href="#i-lookup"/></svg></button></div>
                </div>
                <div class="fields right">
                    <label for="greeting">Greeting:</label>
                    <input type="text" id="greeting" value="Ms. Bennett">
                    <label for="company">Company:</label>
                    <div class="combo"><select id="company"><option>GRM Info Tech</option></select><button type="button" aria-label="Clear"><svg class="glyph"><use href="#i-x"/></svg></button><button type="button" aria-label="Open list"><svg class="glyph"><use href="#i-chevdown"/></svg></button><button type="button" class="lookup" aria-label="Look up"><svg class="icon"><use href="#i-lookup"/></svg></button></div>
                    <label for="position">Position:</label>
                    <div class="combo short"><select id="position"><option>COO</option></select><button type="button" aria-label="Clear"><svg class="glyph"><use href="#i-x"/></svg></button><button type="button" aria-label="Open list"><svg class="glyph"><use href="#i-chevdown"/></svg></button></div>
                    <label for="manager">Account Manager:</label>
                    <div class="combo manager"><select id="manager"><option>Ingram, Ellen P</option></select><button type="button" aria-label="Clear"><svg class="glyph"><use href="#i-x"/></svg></button><button type="button" aria-label="Open list"><svg class="glyph"><use href="#i-chevdown"/></svg></button><button type="button" class="lookup" aria-label="Look up"><svg class="icon"><use href="#i-lookup"/></svg></button></div>
                    <label for="inactive">Inactive</label>
                    <input type="checkbox" id="inactive">
                </div>
            </form>

            <div class="page-tabs related">
                <button><svg class="icon"><use href="#i-factory"/></svg>Companies</button>
                <button><svg class="icon"><use href="#i-bubble"/></svg>Communications</button>
                <button><svg class="icon"><use href="#i-task"/></svg>Tasks</button>
                <button><svg class="icon"><use href="#i-coins"/></svg>Opportunities</button>
                <button><svg class="icon red"><use href="#i-pushpin"/></svg>Events</button>
                <button><svg class="icon"><use href="#i-calc"/></svg>Finance</button>
                <button><svg class="icon"><use href="#i-box"/></svg>Products</button>
                <button class="active"><svg class="icon"><use href="#i-notes"/></svg>Notes</button>
                <button><svg class="icon"><use href="#i-docs"/></svg>Documents</button>
            </div>
            <div class="notes-page">
                <div class="page-tabs small">
                    <button>General</button>
                    <button class="active">Delivery</button>
                    <button>Accommodation</button>
                    <button>Dietary</button>
                    <button>Travel</button>
                </div>
                <div class="delivery">
                    <div class="parent-row">
                        <label for="useParent">Use Parent Delivery Notes</label>
                        <div class="parent-check"><input type="checkbox" id="useParent" checked></div>
                    </div>
                    <div class="note-box">
                        <textarea aria-label="Delivery notes">Send deliveries to side entrance</textarea>
                        <div class="scrollbar idle">
                            <svg class="glyph"><use href="#i-chevup"/></svg>
                            <svg class="glyph"><use href="#i-chevdown"/></svg>
                        </div>
                    </div>
                </div>
            </div>
        </div>
        <div class="status-bar"><span>User: AliceK_001000</span><svg class="grip"><use href="#i-grip"/></svg></div>
    </div>
</body>
</html>
```
FILE: styles.css
```
* {
    box-sizing: border-box;
}

body {
    margin: 0;
    height: 100vh;
    position: relative;
    overflow: hidden;
    background-color: #1d5c7b;
    color: #3b3b3b;
    font-family: Roboto, Tahoma, sans-serif;
    font-size: 11px;
    line-height: 13px;
}

button,
input,
select,
textarea {
    font: inherit;
    color: inherit;
    margin: 0;
}

button {
    background: none;
    border: none;
    padding: 0;
}

svg {
    display: block;
    flex: none;
}

.sprite {
    position: absolute;
}

.icon {
    width: 16px;
    height: 16px;
}

.glyph {
    width: 10px;
    height: 10px;
    color: #777;
}

.red {
    color: #d0242c;
}

.icon-abc {
    font-family: Roboto, sans-serif;
    font-size: 9px;
    font-weight: bold;
    fill: #1e2f5c;
}

/* Windows */
.window {
    position: absolute;
    display: flex;
    flex-direction: column;
    background-color: #fff;
}

.main-window {
    top: 4px;
    right: 4px;
    bottom: 3px;
    left: 4px;
    border: 1px solid #666;
}

.contact-window {
    top: 34px;
    right: 53px;
    bottom: 4px;
    left: 104px;
    border: 1px solid #0072c6;
    box-shadow: 0 0 4px rgba(0, 0, 0, 0.4);
}

.title-bar {
    display: grid;
    grid-template-columns: 1fr auto 1fr;
    align-items: center;
    height: 31px;
    flex: none;
    padding-bottom: 1px;
    color: #555;
}

.quick-access {
    display: flex;
    align-items: center;
}

.quick-access button {
    width: 28px;
    display: flex;
    justify-content: center;
}

.quick-access button:disabled {
    filter: grayscale(1);
    opacity: 0.7;
}

.quick-access .qa-more {
    width: 32px;
}

.qa-logo {
    width: 20px;
    height: 14px;
    margin: 0 3px 0 4px;
}

.qa-person {
    margin: 0 5px 0 6px;
}

.window-controls {
    display: flex;
    justify-content: flex-end;
    padding-right: 5px;
}

.window-controls button {
    width: 30px;
    display: flex;
    justify-content: center;
    color: #666;
}

.main-window .window-controls button {
    color: #bbb;
}

.window-controls svg {
    width: 12px;
    height: 12px;
}

/* Ribbon */
.ribbon-tabs {
    display: flex;
    gap: 4px;
    height: 22px;
    flex: none;
    border-bottom: 1px solid #d5d5d5;
}

.file-button {
    width: 68px;
    height: 22px;
    display: flex;
    align-items: center;
    justify-content: center;
    background-color: #0072c6;
}

.file-button svg {
    width: 26px;
    height: 17px;
}

.ribbon-tab {
    height: 22px;
    padding: 0 11px;
    border: 1px solid #d5d5d5;
    border-bottom: none;
    background-color: #fff;
    color: #0072c6;
}

.ribbon {
    display: flex;
    height: 93px;
    flex: none;
    padding-top: 5px;
    border-bottom: 1px solid #d5d5d5;
}

.ribbon-group {
    display: flex;
    flex-direction: column;
    height: 81px;
    padding: 0 4px;
    border-right: 1px solid #ddd;
}

.ribbon-group.records {
    width: 117px;
}

.ribbon-buttons {
    display: flex;
    flex: 1;
    align-items: flex-start;
}

.ribbon-caption {
    margin-bottom: -4px;
    text-align: center;
}

.rb {
    display: flex;
    flex-direction: column;
    align-items: center;
    white-space: nowrap;
    text-align: center;
}

.rb svg {
    width: 30px;
    height: 30px;
    margin: 2px 0 6px;
}

.rb.find svg {
    width: 26px;
    height: 26px;
    margin: 4px 0 8px;
}

.rb .drop {
    width: 7px;
    height: 7px;
    margin: 3px 0 0;
}

.rb:disabled {
    color: #9d9d9d;
}

.rb:disabled svg {
    filter: grayscale(1);
    opacity: 0.8;
}

.w44 { width: 44px; }
.w50 { width: 50px; }
.w58 { width: 58px; }
.w64 { width: 64px; }
.w70 { width: 70px; }
.w82 { width: 82px; }
.w128 { width: 128px; }

.ribbon-collapse {
    margin-left: auto;
    align-self: flex-end;
    padding: 6px 10px;
}

.status-bar {
    display: flex;
    align-items: center;
    justify-content: space-between;
    height: 24px;
    flex: none;
    padding: 0 0 0 7px;
    background-color: #0072c6;
    color: #fff;
}

.grip {
    width: 9px;
    height: 9px;
    align-self: flex-end;
    margin: 0 1px 3px 0;
}

/* Contacts list window */
.main-body {
    flex: 1;
    min-height: 0;
    display: flex;
    padding: 2px 2px 2px 3px;
}

.nav-panel {
    width: 190px;
    flex: none;
    display: flex;
    flex-direction: column;
    border: 1px solid #aaa;
}

.nav-panel h2,
.nav-panel h3 {
    margin: 0;
    font-size: 13px;
    font-weight: normal;
    line-height: 18px;
}

.nav-panel h2 {
    padding: 8px 11px;
}

.nav-panel h3 {
    padding: 7px 6px 8px;
}

.tree {
    flex: 1;
    min-height: 0;
    margin: 0;
    padding: 0 0 0 6px;
    overflow: hidden;
    list-style: none;
    border: 1px solid #aaa;
}

.tree li {
    display: flex;
    align-items: center;
    height: 18px;
    white-space: nowrap;
}

.tree .toggle {
    width: 8px;
    height: 8px;
    margin-right: 5px;
}

.tree .child {
    padding-left: 31px;
}

.tree span {
    flex: 1;
    margin-left: 1px;
    padding: 3px;
}

.tree .selected span {
    background-color: #e3f0fb;
}

.splitter {
    height: 12px;
    display: flex;
    align-items: center;
    justify-content: center;
    background-color: #eaeaea;
}

.splitter::before {
    content: "";
    width: 40px;
    border-top: 2px dotted #777;
}

.nav-links a {
    display: flex;
    align-items: center;
    gap: 6px;
    height: 36px;
    padding-left: 11px;
    color: #3b3b3b;
    font-size: 14px;
    text-decoration: none;
    white-space: nowrap;
}

.nav-links .current {
    color: #0072c6;
}

.nav-small {
    display: flex;
    align-items: center;
    gap: 12px;
    height: 36px;
    padding-left: 7px;
}

.list-area {
    flex: 1;
    display: flex;
    flex-direction: column;
    padding-left: 6px;
}

.list-toolbar {
    display: flex;
    justify-content: flex-end;
    align-items: center;
    height: 26px;
    padding-right: 5px;
}

.list-frame {
    flex: 1;
    min-height: 0;
    display: flex;
    flex-direction: column;
    border: 2px solid #aaa;
}

.list-header {
    height: 20px;
    margin-right: 17px;
    border-right: 1px solid #aaa;
    border-bottom: 1px solid #aaa;
}

.list-scroll {
    flex: 1;
    min-height: 0;
    display: flex;
    overflow: hidden;
}

.list-rows {
    flex: 1;
    height: 525px;
    border-collapse: collapse;
}

.list-rows td {
    height: 21px;
    padding: 0;
    background-color: #d8bfd8;
    border-bottom: 1px solid #d3d3d3;
}

.list-rows .blue td {
    background-color: #87cefa;
}

.list-footer {
    height: 31px;
    border-top: 1px solid #aaa;
}

.scrollbar {
    width: 17px;
    flex: none;
    display: flex;
    flex-direction: column;
    align-items: center;
    justify-content: space-between;
    padding: 3px 0;
    background-color: #efefef;
}

.scrollbar .thumb {
    width: 17px;
    height: 17px;
    margin: 39px 0 auto;
    background-color: #c9c9c9;
}

.scrollbar.idle .glyph {
    color: #c6c6c6;
}

/* Contact window */
.contact-body {
    flex: 1;
    min-height: 0;
    display: flex;
    flex-direction: column;
    padding: 5px 5px 0;
}

.page-tabs {
    position: relative;
    display: flex;
    align-items: flex-end;
    height: 27px;
    flex: none;
    margin-bottom: -1px;
}

.page-tabs button {
    display: flex;
    align-items: center;
    gap: 1px;
    height: 25px;
    padding: 0 10px;
    border: 1px solid #aaa;
    background-color: #fff;
    white-space: nowrap;
}

.page-tabs .active {
    height: 27px;
    padding: 0 11px 1px;
    border-bottom-color: #fff;
}

.page-tabs.related {
    margin-top: 5px;
    padding-left: 1px;
}

.page-tabs.small {
    height: 24px;
    padding-left: 1px;
}

.page-tabs.small button {
    height: 22px;
    padding: 0 9px;
}

.page-tabs.small .active {
    height: 24px;
    padding: 0 10px 1px;
}

.details {
    display: grid;
    grid-template-columns: 655fr 638fr;
    gap: 10px;
    padding: 10px 10px 10px 9px;
    border: 1px solid #aaa;
}

.fields {
    display: grid;
    align-items: center;
    align-content: start;
    row-gap: 2px;
}

.fields.left {
    grid-template-columns: 64px 1fr;
}

.fields.right {
    grid-template-columns: 93px 1fr;
}

input[type="text"],
.combo {
    width: 100%;
    height: 20px;
    border: 1px solid #aaa;
    background-color: #fff;
}

input[type="text"] {
    padding: 0 2px;
}

.combo {
    display: flex;
    height: 22px;
}

.combo.short {
    height: 20px;
}

.combo select {
    flex: 1;
    min-width: 0;
    padding: 0 2px;
    border: none;
    background: none;
    appearance: none;
}

.combo button {
    width: 16px;
    display: flex;
    align-items: center;
    justify-content: center;
    border-left: 1px solid #aaa;
    background-color: #ececec;
}

.combo .lookup {
    width: 20px;
}

.combo.manager {
    background-color: #d8bfd8;
    color: #000;
}

input[type="checkbox"] {
    width: 13px;
    height: 13px;
    margin: 4px 1px;
    display: flex;
    align-items: center;
    justify-content: center;
    appearance: none;
    border: 1px solid #999;
    background-color: #fff;
}

input[type="checkbox"]:checked::before {
    content: "";
    width: 8px;
    height: 4px;
    margin-bottom: 3px;
    border-left: 2px solid #444;
    border-bottom: 2px solid #444;
    transform: rotate(-45deg);
}

.notes-page {
    flex: 1;
    min-height: 0;
    display: flex;
    flex-direction: column;
    padding: 5px 5px 1px;
    border: 1px solid #aaa;
}

.delivery {
    flex: 1;
    min-height: 0;
    display: flex;
    flex-direction: column;
    gap: 2px;
    padding: 10px 10px 9px 9px;
    border: 1px solid #aaa;
}

.parent-row {
    display: flex;
    align-items: center;
    height: 19px;
}

.parent-row label {
    width: 132px;
}

.parent-check {
    flex: 1;
    height: 19px;
    display: flex;
    align-items: center;
    background-color: #ffffe1;
}

.note-box {
    flex: 1;
    min-height: 0;
    display: flex;
    border: 1px solid #000;
    outline: 1px solid #aaa;
    outline-offset: -2px;
    padding: 1px;
}

.note-box textarea {
    flex: 1;
    padding: 6px 16px;
    border: none;
    resize: none;
    color: #000;
    font-family: "Open Sans", sans-serif;
    font-size: 12px;
}
```
